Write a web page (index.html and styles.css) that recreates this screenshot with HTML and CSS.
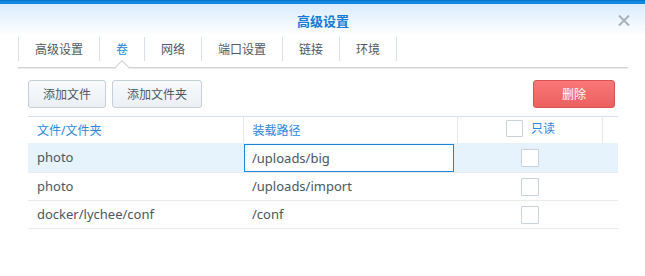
FILE: index.html
```html
<!DOCTYPE html>
<html lang="zh">
<head>
<meta charset="utf-8">
<title>高级设置</title>
<link rel="stylesheet" href="styles.css">
</head>
<body>
<div class="window">
  <div class="topbar"></div>
  <header class="titlebar">
    <span class="spacer"></span>
    <h1 class="title">高级设置</h1>
    <span class="close" aria-label="关闭">
      <svg width="12" height="11" viewBox="0 0 12 11"><path d="M1 0.5 L11 10.5 M11 0.5 L1 10.5" stroke="#a7b0b9" stroke-width="2" fill="none"/></svg>
    </span>
  </header>
  <nav class="tabs">
    <span class="tab">高级设置</span>
    <span class="tab active">卷</span>
    <span class="tab">网络</span>
    <span class="tab">端口设置</span>
    <span class="tab">链接</span>
    <span class="tab last">环境</span>
  </nav>
  <div class="toolbar">
    <button class="btn">添加文件</button>
    <button class="btn">添加文件夹</button>
    <span class="grow"></span>
    <button class="btn danger">删除</button>
  </div>
  <table class="grid">
    <colgroup>
      <col class="c1"><col class="c2"><col class="c3"><col class="c4">
    </colgroup>
    <thead>
      <tr>
        <th>文件/文件夹</th>
        <th>装载路径</th>
        <th class="center"><span class="hcheck"><span class="box"></span><span>只读</span></span></th>
        <th class="blank"></th>
      </tr>
    </thead>
    <tbody>
      <tr class="selected">
        <td>photo</td>
        <td class="edit"><div class="input">/uploads/big</div></td>
        <td class="center"><span class="box"></span></td>
        <td></td>
      </tr>
      <tr>
        <td>photo</td>
        <td>/uploads/import</td>
        <td class="center"><span class="box"></span></td>
        <td></td>
      </tr>
      <tr>
        <td>docker/lychee/conf</td>
        <td>/conf</td>
        <td class="center"><span class="box"></span></td>
        <td></td>
      </tr>
    </tbody>
  </table>
</div>
</body>
</html>
```
FILE: styles.css
```css
* { box-sizing: border-box; }
html, body { margin: 0; padding: 0; background: #ffffff; }
body {
  font-family: "Noto Sans", "Noto Sans CJK SC", sans-serif;
  color: #4b5661;
  width: 645px;
  height: 276px;
  overflow: hidden;
}
.window {
  background: linear-gradient(to bottom, #d5e9fb 0px, #e6f2fd 14px, #ffffff 36px, #ffffff 100%);
  height: 276px;
}
.topbar {
  height: 4px;
  background: linear-gradient(to bottom, #0c71c8 0, #0c71c8 1px, #1089e4 1px);
}
.titlebar {
  height: 33px;
  display: grid;
  grid-template-columns: 1fr auto 1fr;
  align-items: center;
}
.title {
  margin: 0;
  font-family: "Noto Sans CJK SC", sans-serif;
  font-size: 13px;
  font-weight: 700;
  color: #1679d6;
  line-height: 33px;
  padding-left: 1px;
}
.close {
  justify-self: end;
  margin-right: 15px;
  display: flex;
  align-items: center;
  height: 11px;
}
.tabs {
  margin: 0 17px 0 18px;
  display: flex;
  padding-bottom: 6px;
  border-bottom: 1px solid #d2d2d2;
  box-shadow: 0 1px 0 #ececec;
}
.tab {
  position: relative;
  height: 24px;
  line-height: 24px;
  padding: 0 16px;
  border-left: 1px solid #d9e0e7;
  font-family: "Noto Sans CJK SC", sans-serif;
  font-size: 12px;
  color: #4e5862;
}
.tab.last { border-right: 1px solid #d9e0e7; }
.tab.active { color: #1f7fd9; }
.tab.active::after {
  content: "";
  position: absolute;
  left: 50%;
  bottom: -11px;
  width: 9px;
  height: 9px;
  margin-left: -5px;
  background: #ffffff;
  border-top: 1px solid #d2d2d2;
  border-left: 1px solid #d2d2d2;
  transform: rotate(45deg);
}
.toolbar {
  display: flex;
  gap: 6px;
  margin: 12px 30px 0 28px;
}
.grow { flex: 1; }
.btn {
  height: 28px;
  padding: 0 14px;
  border: 1px solid #c6ced7;
  border-radius: 3px;
  background: linear-gradient(to bottom, #f8fafc, #ebf0f5);
  font-family: "Noto Sans CJK SC", sans-serif;
  font-size: 12px;
  color: #4e5862;
  line-height: 26px;
}
.btn:nth-child(1) { width: 78px; }
.btn:nth-child(2) { width: 90px; }
.btn.danger {
  width: 82px;
  border-color: #d95252;
  background: linear-gradient(to bottom, #fa7878, #ec5f5f);
  color: #ffffff;
}
.grid {
  margin: 8px 27px 0 28px;
  width: 590px;
  border-collapse: collapse;
  table-layout: fixed;
  border-top: 1px solid #d6dee6;
}
.c1 { width: 215px; }
.c2 { width: 214px; }
.c3 { width: 145px; }
.c4 { width: 16px; }
th {
  height: 26px;
  padding: 0 9px;
  text-align: left;
  font-weight: 400;
  font-size: 12px;
  color: #2b87dc;
  border-left: 1px solid #e2e8ee;
  white-space: nowrap;
}
th:first-child { border-left: none; }
th.blank { padding: 0; }
td {
  height: 28px;
  padding: 0 9px;
  font-size: 13px;
  color: #4b5661;
  border-bottom: 1px solid #e9ecef;
  white-space: nowrap;
}
.center { text-align: center; }
tr.selected td { background: #e6f3fd; }
td.edit { padding: 0 3px 0 1px; }
.input {
  height: 28px;
  border: 1px solid #1a84da;
  background: #ffffff;
  padding-left: 7px;
  line-height: 26px;
  margin-top: 1px;
}
.box {
  display: inline-block;
  width: 18px;
  height: 18px;
  border: 1px solid #c9d1da;
  background: #ffffff;
  border-radius: 1px;
  vertical-align: middle;
}
.hcheck {
  display: inline-flex;
  align-items: center;
  gap: 8px;
  margin-left: 2px;
}
.hcheck .box { width: 17px; height: 17px; }
```
